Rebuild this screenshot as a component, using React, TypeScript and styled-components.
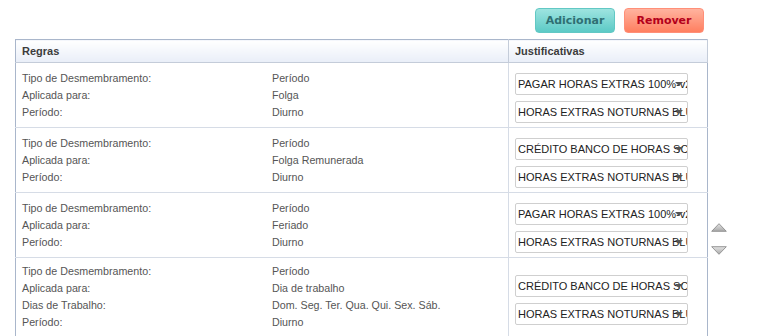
import React from 'react';
import styled, { createGlobalStyle } from 'styled-components';

const rules = [
  {
    info: [
      ['Tipo de Desmembramento:', 'Período'],
      ['Aplicada para:', 'Folga'],
      ['Período:', 'Diurno'],
    ],
    just: ['PAGAR HORAS EXTRAS 100%-v2 FOLGA', 'HORAS EXTRAS NOTURNAS BLUE 50%'],
  },
  {
    info: [
      ['Tipo de Desmembramento:', 'Período'],
      ['Aplicada para:', 'Folga Remunerada'],
      ['Período:', 'Diurno'],
    ],
    just: ['CRÉDITO BANCO DE HORAS SC 100%', 'HORAS EXTRAS NOTURNAS BLUE 50%'],
  },
  {
    info: [
      ['Tipo de Desmembramento:', 'Período'],
      ['Aplicada para:', 'Feriado'],
      ['Período:', 'Diurno'],
    ],
    just: ['PAGAR HORAS EXTRAS 100%-v2 FOLGA', 'HORAS EXTRAS NOTURNAS BLUE 50%'],
  },
  {
    info: [
      ['Tipo de Desmembramento:', 'Período'],
      ['Aplicada para:', 'Dia de trabalho'],
      ['Dias de Trabalho:', 'Dom. Seg. Ter. Qua. Qui. Sex. Sáb.'],
      ['Período:', 'Diurno'],
    ],
    just: ['CRÉDITO BANCO DE HORAS SC 100%', 'HORAS EXTRAS NOTURNAS BLUE 50%'],
  },
];

const App = () => {
  return (
    <Page>
      <GlobalStyle />
      <Toolbar>
        <ActionButton variant="add">Adicionar</ActionButton>
        <ActionButton variant="remove">Remover</ActionButton>
      </Toolbar>
      <Body>
        <Grid>
          <thead>
            <tr>
              <HeadCell>Regras</HeadCell>
              <HeadCell>Justificativas</HeadCell>
            </tr>
          </thead>
          <tbody>
            {rules.map((rule, i) => (
              <Row key={i}>
                <RuleCell>
                  {rule.info.map(([label, value]) => (
                    <InfoLine key={label}>
                      <Label>{label}</Label>
                      <Value>{value}</Value>
                    </InfoLine>
                  ))}
                </RuleCell>
                <JustCell>
                  {rule.just.map((text, j) => (
                    <FakeSelect key={j}>
                      <SelectText>{text}</SelectText>
                      <Caret />
                    </FakeSelect>
                  ))}
                </JustCell>
              </Row>
            ))}
          </tbody>
        </Grid>
        <Side>
          <Arrow viewBox="0 0 16 9" aria-label="subir">
            <defs>
              <linearGradient id="ga" x1="0" y1="0" x2="0" y2="1">
                <stop offset="0" stopColor="#e4e4e4" />
                <stop offset="1" stopColor="#a8a8a8" />
              </linearGradient>
            </defs>
            <polygon points="8,0.7 15.3,8.3 0.7,8.3" fill="url(#ga)" stroke="#8c8c8c" strokeWidth="0.9" />
          </Arrow>
          <Arrow viewBox="0 0 16 9" aria-label="descer">
            <defs>
              <linearGradient id="gb" x1="0" y1="0" x2="0" y2="1">
                <stop offset="0" stopColor="#e4e4e4" />
                <stop offset="1" stopColor="#a8a8a8" />
              </linearGradient>
            </defs>
            <polygon points="0.7,0.7 15.3,0.7 8,8.3" fill="url(#gb)" stroke="#8c8c8c" strokeWidth="0.9" />
          </Arrow>
        </Side>
      </Body>
    </Page>
  );
};

const GlobalStyle = createGlobalStyle`
  body {
    margin: 0;
    background: #fff;
    font-family: "Liberation Sans", Arial, sans-serif;
  }
`;

const Page = styled.div`
  width: 760px;
  padding: 8px 0 0 15px;
  box-sizing: border-box;
`;

const Toolbar = styled.div`
  display: flex;
  justify-content: flex-end;
  gap: 9px;
  width: 693px;
  padding-right: 4px;
  box-sizing: border-box;
  margin-bottom: 6px;
`;

const ActionButton = styled.button<{ variant: 'add' | 'remove' }>`
  width: 80px;
  height: 25px;
  border-radius: 4px;
  font-family: Verdana, "DejaVu Sans", sans-serif;
  font-weight: bold;
  font-size: 11px;
  cursor: pointer;
  padding: 0;
  ${({ variant }) =>
    variant === 'add'
      ? `
    color: #2f6f73;
    border: 1px solid #62c8c4;
    background: linear-gradient(#9ee4e0, #5ccac6);
  `
      : `
    color: #b3001b;
    border: 1px solid #ff8f78;
    background: linear-gradient(#ffb39f, #ff7f60);
  `}
`;

const Body = styled.div`
  display: flex;
  align-items: flex-start;
`;

const Grid = styled.table`
  width: 693px;
  border-collapse: collapse;
  border: 1px solid #a9b6cb;
  table-layout: fixed;
`;

const HeadCell = styled.th`
  height: 22px;
  padding: 0 6px;
  text-align: left;
  font-size: 11px;
  font-weight: bold;
  color: #3c3c3c;
  background: linear-gradient(#ffffff, #e9eef8);
  border-bottom: 1px solid #c4ccd9;
  border-right: 1px solid #c4ccd9;
  &:first-child {
    width: 480px;
  }
`;

const Row = styled.tr`
  border-bottom: 1px solid #d6dce6;
`;

const RuleCell = styled.td`
  padding: 5px 6px 5px;
  vertical-align: middle;
  border-right: 1px solid #d6dce6;
`;

const InfoLine = styled.div`
  display: flex;
  height: 17px;
  line-height: 17px;
  font-size: 10.7px;
  color: #555;
`;

const Label = styled.span`
  width: 250px;
`;

const Value = styled.span``;

const JustCell = styled.td`
  padding: 10px 0 4px 6px;
  vertical-align: middle;
`;

const FakeSelect = styled.div`
  position: relative;
  width: 173px;
  height: 22px;
  box-sizing: border-box;
  border: 1px solid #cfcfcf;
  border-radius: 2px;
  background: #fff;
  overflow: hidden;
  & + & {
    margin-top: 6px;
  }
`;

const SelectText = styled.div`
  padding-left: 2px;
  line-height: 20px;
  font-size: 11px;
  color: #222;
  white-space: nowrap;
`;

const Caret = styled.span`
  position: absolute;
  right: 4px;
  top: 8px;
  width: 0;
  height: 0;
  border-left: 4px solid transparent;
  border-right: 4px solid transparent;
  border-top: 4px solid #555;
`;

const Side = styled.div`
  display: flex;
  flex-direction: column;
  align-items: center;
  gap: 14px;
  width: 20px;
  padding: 184px 0 0 1px;
`;

const Arrow = styled.svg`
  width: 16px;
  height: 9px;
  display: block;
`;

export default App;
